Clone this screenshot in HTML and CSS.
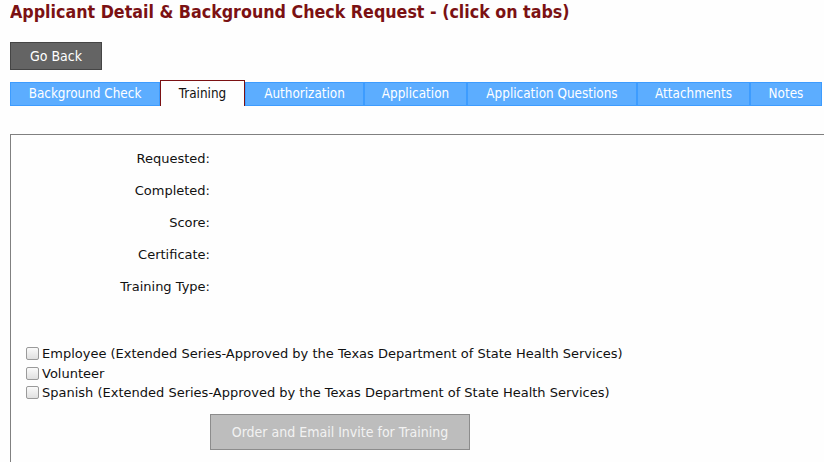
FILE: index.html
```html
<!DOCTYPE html>
<html>
<head>
<meta charset="utf-8">
<link rel="stylesheet" href="styles.css">
</head>
<body>
<h1 class="title">Applicant Detail &amp; Background Check Request - (click on tabs)</h1>
<div class="actions"><button class="btn-back">Go Back</button></div>
<ul class="tabs">
  <li class="tab">Background Check</li>
  <li class="tab active">Training</li>
  <li class="tab">Authorization</li>
  <li class="tab">Application</li>
  <li class="tab">Application Questions</li>
  <li class="tab">Attachments</li>
  <li class="tab">Notes</li>
</ul>
<div class="panel">
  <div class="fields">
    <div class="label">Requested:</div><div class="value"></div>
    <div class="label">Completed:</div><div class="value"></div>
    <div class="label">Score:</div><div class="value"></div>
    <div class="label">Certificate:</div><div class="value"></div>
    <div class="label">Training Type:</div><div class="value"></div>
  </div>
  <div class="options">
    <label class="option"><span class="box"></span>Employee (Extended Series-Approved by the Texas Department of State Health Services)</label>
    <label class="option"><span class="box"></span>Volunteer</label>
    <label class="option"><span class="box"></span>Spanish (Extended Series-Approved by the Texas Department of State Health Services)</label>
  </div>
  <div class="order-row"><button class="btn-order">Order and Email Invite for Training</button></div>
</div>
</body>
</html>
```
FILE: styles.css
```css
html, body { overflow: hidden; }
body {
  margin: 0 0 0 10px;
  background: #fefefe;
  font-family: "DejaVu Sans", Verdana, sans-serif;
  font-size: 13px;
  color: #111;
}
.title {
  margin: 0;
  padding-top: 2px;
  font-family: "DejaVu Sans Condensed", "DejaVu Sans", sans-serif;
  font-size: 17.7px;
  font-weight: bold;
  line-height: 20px;
  color: #7b1113;
}
.actions { margin-top: 20px; }
.btn-back {
  width: 92px;
  height: 28px;
  background: #646464;
  border: 1px solid #454545;
  color: #fff;
  font-family: "DejaVu Sans Condensed", "DejaVu Sans", sans-serif;
  font-size: 14px;
  padding: 0;
}
.tabs {
  list-style: none;
  margin: 10px 0 0 0;
  padding: 0;
  display: grid;
  grid-template-columns: 150px 85px 119px 103px 170px 113px 72px;
  align-items: end;
  height: 26px;
}
.tab {
  height: 24px;
  box-sizing: border-box;
  background: #5cadff;
  border: 1px solid #3d9cff;
  color: #fff;
  text-align: center;
  font-family: "DejaVu Sans Condensed", "DejaVu Sans", sans-serif;
  font-size: 13.4px;
  line-height: 22px;
}
.tab.active {
  height: 26px;
  background: #fefefe;
  border: 1px solid #7b1113;
  border-bottom: 0;
  color: #111;
  line-height: 26px;
}
.panel {
  margin-top: 28px;
  border: 1px solid #808080;
  border-right: 0;
  height: 340px;
}
.fields {
  display: grid;
  grid-template-columns: 199px 1fr;
  row-gap: 16px;
  padding-top: 16px;
}
.label {
  text-align: right;
  line-height: 16px;
}
.options {
  margin-top: 49px;
  padding-left: 15px;
  display: flex;
  flex-direction: column;
}
.option {
  display: flex;
  align-items: center;
  line-height: 19.5px;
}
.box {
  width: 11px;
  height: 11px;
  border: 1px solid #9a9a9a;
  border-radius: 2px;
  background: linear-gradient(#fafafa, #e0e0e0);
  margin-right: 3px;
  flex: none;
}
.order-row { padding: 11px 0 0 199px; }
.btn-order {
  width: 260px;
  height: 36px;
  background: #bdbdbd;
  border: 1px solid #8c8c8c;
  color: #f2f2f2;
  font-family: "DejaVu Sans Condensed", "DejaVu Sans", sans-serif;
  font-size: 14px;
  padding: 0;
}
```
